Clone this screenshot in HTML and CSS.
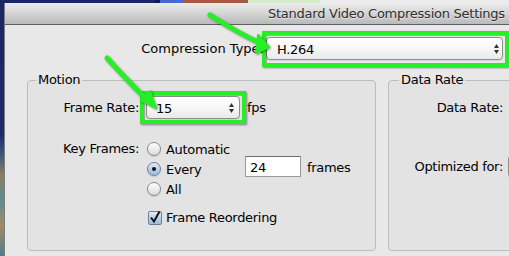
FILE: index.html
```html
<!DOCTYPE html>
<html lang="en">
<head>
  <meta charset="UTF-8">
  <title>Standard Video Compression Settings</title>
  <link rel="stylesheet" href="styles.css">
</head>
<body>
  <div class="desktop-strip"></div>
  <div class="screen">
    <div class="desktop-edge"></div>
    <div class="window">
      <div class="titlebar"><span class="title">Standard Video Compression Settings</span></div>
      <div class="content">
        <div class="type-row">
          <span class="type-label">Compression Type:</span>
          <div class="popup popup-type highlight">
            <span>H.264</span>
            <svg class="stepper" width="5" height="10" viewBox="0 0 5 10"><path d="M0 4 L2.5 0 L5 4 Z M0 6 L2.5 10 L5 6 Z"/></svg>
          </div>
        </div>

        <div class="groups">
          <fieldset class="group group-motion">
            <legend>Motion</legend>
            <div class="form motion-form">
              <span class="form-label rate-label">Frame Rate:</span>
              <div class="form-control rate-control">
                <div class="popup popup-rate highlight">
                  <span>15</span>
                  <svg class="stepper" width="5" height="10" viewBox="0 0 5 10"><path d="M0 4 L2.5 0 L5 4 Z M0 6 L2.5 10 L5 6 Z"/></svg>
                </div>
                <span class="unit">fps</span>
              </div>

              <span class="form-label key-label">Key Frames:</span>
              <div class="form-control radios">
                <div class="radio-row"><span class="radio"></span><span>Automatic</span></div>
                <div class="radio-row"><span class="radio checked"></span><span class="every-label">Every</span><span class="field">24</span><span class="unit">frames</span></div>
                <div class="radio-row"><span class="radio"></span><span>All</span></div>
              </div>

              <span></span>
              <div class="form-control check-row">
                <span class="checkbox">
                  <svg width="12" height="13" viewBox="0 0 12 13"><path d="M2 6.5 L5 10.5 L10.5 0.5" /></svg>
                </span>
                <span>Frame Reordering</span>
              </div>
            </div>
          </fieldset>

          <fieldset class="group group-rate">
            <legend>Data Rate</legend>
            <div class="form rate-form">
              <span class="form-label rate-label">Data Rate:</span>
              <div class="form-control rate-control"></div>
              <span class="form-label opt-label">Optimized for:</span>
              <div class="form-control opt-control"><div class="popup popup-stub"></div></div>
            </div>
          </fieldset>
        </div>
      </div>
    </div>
  </div>

  <svg class="arrows" width="509" height="256" viewBox="0 0 509 256">
    <path class="arrow-line" d="M210 15 Q238 33 262 44"/>
    <polygon class="arrow-head" points="269,47 256,53 258,35"/>
    <path class="arrow-line" d="M107 58 Q125 78 147 100"/>
    <polygon class="arrow-head" points="156,108 141,100 150,91"/>
  </svg>
</body>
</html>
```

FILE: styles.css
```css
body {
  margin: 0;
  width: 509px;
  height: 256px;
  overflow: hidden;
  position: relative;
  background: #1c2a66;
  font-family: "DejaVu Sans", "Liberation Sans", sans-serif;
  font-size: 13px;
  letter-spacing: -0.3px;
  color: #000;
}

.desktop-strip {
  height: 3px;
  background: linear-gradient(to right, #1a2766 0 155px, #0e1a4a 155px 160px, #4b67d6 160px 183px, #a85a44 183px 248px, #d6ecc6 248px 320px, #ececec 320px);
}

.screen {
  display: flex;
  height: 253px;
}

.desktop-edge {
  width: 4px;
  flex: none;
  background: linear-gradient(#1b2765, #1d2b6e 52%, #3a5a78 60%, #8b7f62 68%, #5f8c93 78%, #a18a66 88%, #4f7d8a);
}

.window {
  flex: 1;
  min-width: 0;
  background: #e8e8e8;
  border-left: 1px solid #7d7d7d;
}

.titlebar {
  box-sizing: border-box;
  height: 22px;
  padding: 1px 0 0 263px;
  line-height: 20px;
  white-space: nowrap;
  border-bottom: 1px solid #5e5e5e;
  background: linear-gradient(#ececec, #d4d4d4 50%, #bababa);
}

.title {
  letter-spacing: -0.25px;
  color: #2e2e2e;
  text-shadow: 0 1px 0 rgba(255, 255, 255, 0.5);
}

.content {
  padding-top: 12px;
}

.type-row {
  display: flex;
  align-items: center;
}

.type-label {
  width: 259px;
  margin-right: 2px;
  text-align: right;
  letter-spacing: 0;
}

/* popup buttons */
.popup {
  display: flex;
  align-items: center;
  justify-content: space-between;
  box-sizing: border-box;
  height: 23px;
  padding-top: 1px;
  border: 1px solid #8f8f8f;
  border-radius: 4px;
  background: linear-gradient(#ffffff, #f7f7f7 50%, #e9e9e9);
  box-shadow: 0 1px 0 rgba(0, 0, 0, 0.08);
}

.stepper {
  fill: #333;
}

.popup-type {
  width: 237px;
  padding-left: 10px;
  padding-right: 3px;
}

.popup-rate {
  width: 94px;
  padding-left: 9px;
  padding-right: 5px;
}

.popup-stub {
  width: 60px;
}

.highlight {
  position: relative;
}

.highlight::after {
  content: "";
  position: absolute;
  border: 4px solid #27ee27;
  box-shadow: 1px 1px 2px rgba(0, 0, 0, 0.45), inset 1px 1px 1px rgba(0, 0, 0, 0.3);
}

.popup-type::after {
  top: -7px;
  left: -5px;
  right: -7px;
  bottom: -8px;
}

.popup-rate::after {
  top: -6px;
  left: -7px;
  right: -7px;
  bottom: -6px;
}

/* group boxes */
.groups {
  display: flex;
  gap: 12px;
  margin: 12px 0 0 22px;
}

.group {
  box-sizing: border-box;
  height: 179px;
  margin: 0;
  padding: 0;
  min-width: 0;
  border: 1px solid #bdbdbd;
  border-radius: 4px;
  background: rgba(0, 0, 0, 0.02);
}

.group legend {
  margin-left: 8px;
  padding: 0 2px;
  line-height: 16px;
}

.group-motion {
  width: 349px;
  flex: none;
}

.group-rate {
  width: 160px;
  flex: none;
}

.group-rate legend {
  margin-left: 10px;
}

.form {
  display: grid;
  align-items: center;
  padding-top: 8px;
}

.motion-form {
  grid-template-columns: 111px auto;
  column-gap: 7px;
}

.rate-form {
  grid-template-columns: 114px auto;
  column-gap: 5px;
}

.form-label {
  text-align: right;
  white-space: nowrap;
}

.form-control {
  display: flex;
  align-items: center;
}

.rate-control {
  height: 23px;
}

.unit {
  margin-left: 7px;
}

.key-label {
  align-self: start;
  margin-top: 20px;
  line-height: 20px;
}

.radios {
  flex-direction: column;
  align-items: flex-start;
  margin-top: 20px;
}

.radio-row {
  display: flex;
  align-items: center;
  height: 20px;
}

.radio {
  box-sizing: border-box;
  width: 14px;
  height: 14px;
  margin: 0 5px 0 1px;
  border: 1px solid #8a8a8a;
  border-radius: 50%;
  background: linear-gradient(#ffffff, #ececec 55%, #d9d9d9);
  box-shadow: 0 1px 1px rgba(0, 0, 0, 0.12);
}

.radio.checked {
  display: flex;
  align-items: center;
  justify-content: center;
  border-color: #6a7f9c;
  background: linear-gradient(#e4edf7, #b7cde6 55%, #9fbde0);
}

.radio.checked::after {
  content: "";
  width: 4px;
  height: 4px;
  border-radius: 50%;
  background: #111;
}

.every-label {
  display: inline-block;
  width: 79px;
}

.field {
  box-sizing: border-box;
  width: 56px;
  height: 21px;
  margin-top: -6px;
  padding: 1px 0 0 4px;
  line-height: 19px;
  border: 1px solid #9a9a9a;
  border-top-color: #6e6e6e;
  background: #fff;
}

.field + .unit {
  margin-left: 6px;
  margin-top: -4px;
}

.check-row {
  margin-top: 11px;
}

.checkbox {
  box-sizing: border-box;
  display: flex;
  align-items: flex-end;
  width: 14px;
  height: 14px;
  margin: 0 4px 0 2px;
  border: 1px solid #6a7f9c;
  border-radius: 2px;
  background: linear-gradient(#e4edf7, #b7cde6 55%, #9fbde0);
}

.checkbox svg {
  margin-top: -4px;
  fill: none;
  stroke: #111;
  stroke-width: 2;
}

.opt-label,
.opt-control {
  margin-top: 36px;
}

/* annotation arrows */
.arrows {
  position: absolute;
  top: 0;
  left: 0;
  pointer-events: none;
  filter: drop-shadow(1px 1px 1px rgba(0, 0, 0, 0.4));
}

.arrow-line {
  fill: none;
  stroke: #27ee27;
  stroke-width: 5;
  stroke-linecap: round;
}

.arrow-head {
  fill: #27ee27;
  stroke: #27ee27;
  stroke-width: 2;
  stroke-linejoin: round;
}
```
